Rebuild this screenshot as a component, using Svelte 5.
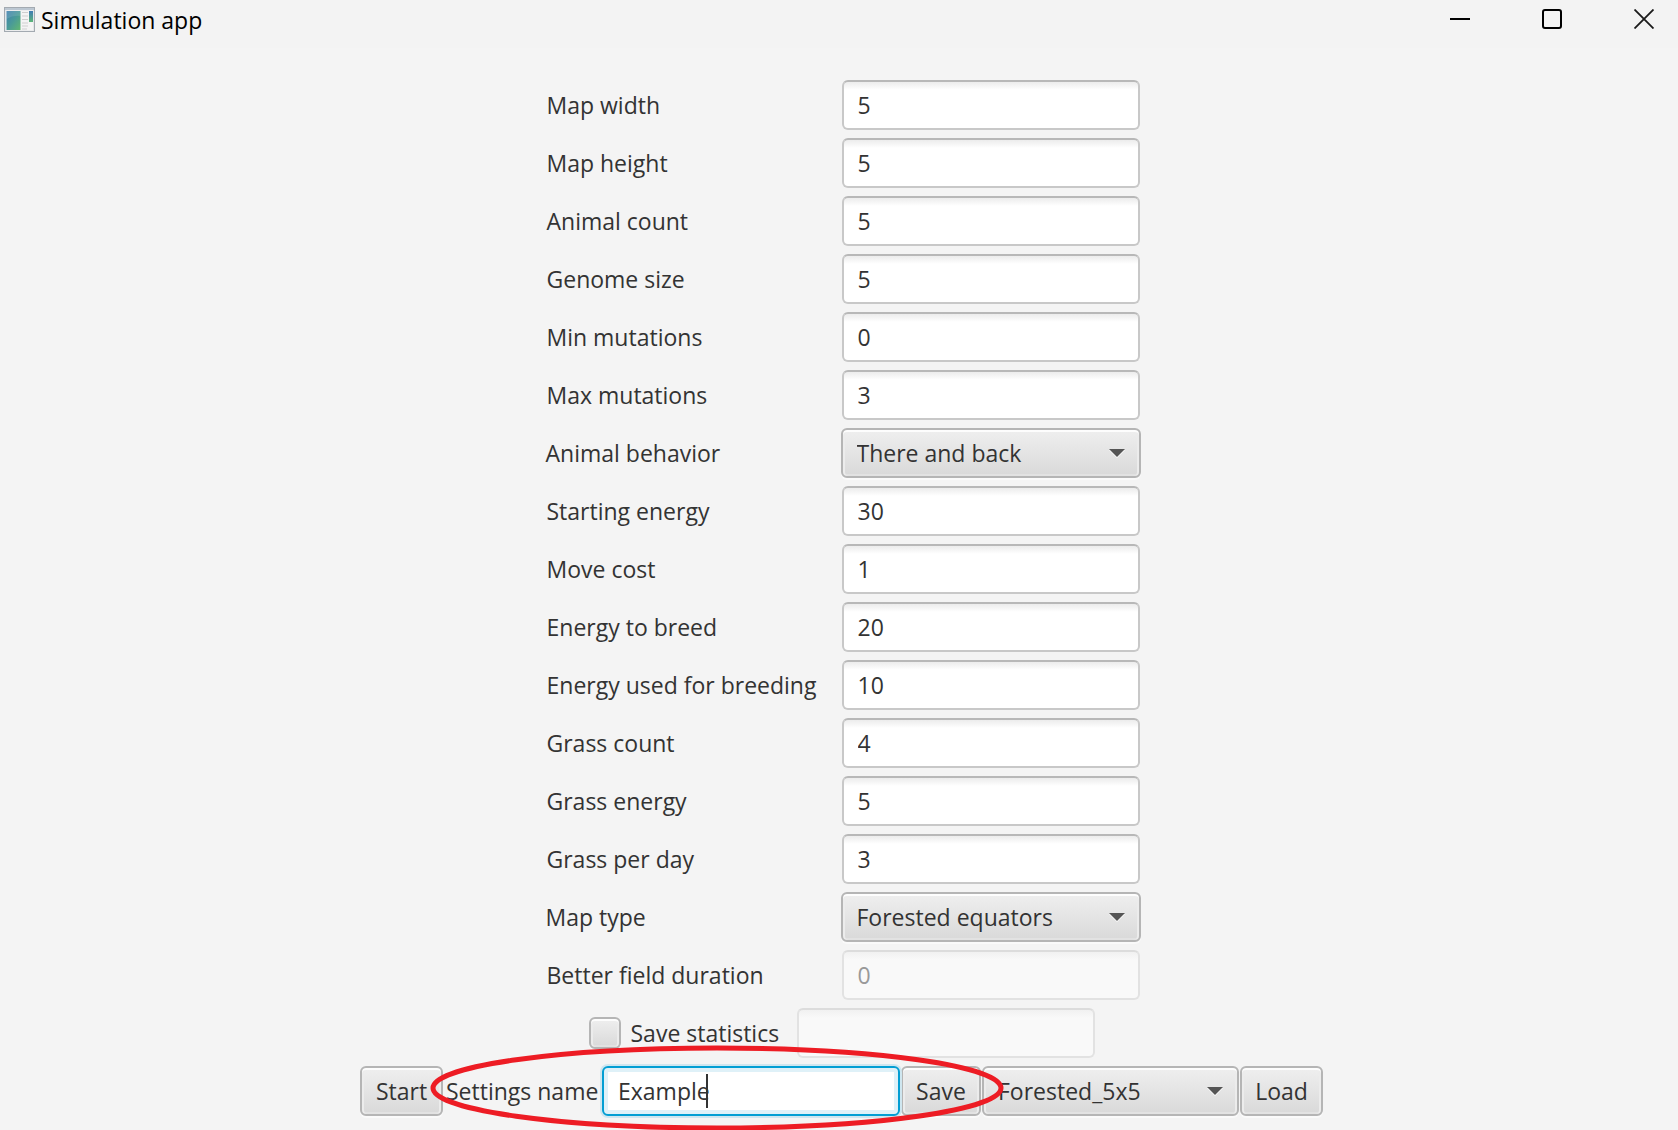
<script>
  const fields = [
    { id: 'map-width', label: 'Map width', value: '5' },
    { id: 'map-height', label: 'Map height', value: '5' },
    { id: 'animal-count', label: 'Animal count', value: '5' },
    { id: 'genome-size', label: 'Genome size', value: '5' },
    { id: 'min-mutations', label: 'Min mutations', value: '0' },
    { id: 'max-mutations', label: 'Max mutations', value: '3' },
    { id: 'behavior', label: 'Animal behavior', value: 'There and back', combo: true },
    { id: 'start-energy', label: 'Starting energy', value: '30' },
    { id: 'move-cost', label: 'Move cost', value: '1' },
    { id: 'breed-energy', label: 'Energy to breed', value: '20' },
    { id: 'breed-used', label: 'Energy used for breeding', value: '10' },
    { id: 'grass-count', label: 'Grass count', value: '4' },
    { id: 'grass-energy', label: 'Grass energy', value: '5' },
    { id: 'grass-day', label: 'Grass per day', value: '3' },
    { id: 'map-type', label: 'Map type', value: 'Forested equators', combo: true },
    { id: 'duration', label: 'Better field duration', value: '0', disabled: true }
  ];
</script>

<div class="window">
  <header class="titlebar">
    <svg class="appicon" width="32" height="26" viewBox="0 0 32 26" aria-hidden="true">
      <defs>
        <linearGradient id="pane" x1="0" y1="0" x2="1" y2="1">
          <stop offset="0" stop-color="#3f7fb0" />
          <stop offset="0.5" stop-color="#4a9a98" />
          <stop offset="1" stop-color="#62b870" />
        </linearGradient>
        <linearGradient id="bar" x1="0" y1="0" x2="0" y2="1">
          <stop offset="0" stop-color="#3f7bb4" />
          <stop offset="1" stop-color="#5cb578" />
        </linearGradient>
      </defs>
      <rect x="0.5" y="0.5" width="30" height="24" fill="#e4e6e8" stroke="#a3aab1" />
      <rect x="1" y="1" width="29" height="2" fill="#bcc7d2" />
      <rect x="2" y="3.5" width="27" height="20" fill="#f4f4f4" />
      <rect x="2.5" y="4" width="14" height="19" fill="url(#pane)" />
      <path d="M2.5 12Q9 8 16.5 9V4H2.5Z" fill="#fff" opacity="0.12" />
      <path d="M18 5.500h6M18 9h6M18 12.500h6M18 16h6M18 19h6M18 22h5" stroke="#cfcfcf" stroke-width="1.200" />
      <rect x="25" y="4" width="4" height="11" fill="url(#bar)" />
    </svg>
    <h1>Simulation app</h1>
    <div class="controls">
      <button type="button" aria-label="Minimize">
        <svg width="20" height="20" viewBox="0 0 20 20"><path d="M0 10h20" stroke="#000" stroke-width="2" /></svg>
      </button>
      <button type="button" aria-label="Maximize">
        <svg width="20" height="20" viewBox="0 0 20 20"><rect x="1" y="1" width="18" height="18" rx="2" fill="none" stroke="#000" stroke-width="2" /></svg>
      </button>
      <button type="button" aria-label="Close">
        <svg width="20" height="20" viewBox="0 0 20 20"><path d="M0.500 0.500l19 19M19.500 0.500l-19 19" stroke="#1a1a1a" stroke-width="1.800" /></svg>
      </button>
    </div>
  </header>

  <main>
    {#each fields as f (f.id)}
      <div class="row">
        <label class="name" for={f.id}>{f.label}</label>
        {#if f.combo}
          <div class="combo">
            <select id={f.id}><option>{f.value}</option></select>
          </div>
        {:else}
          <input class="text" type="text" id={f.id} value={f.value} disabled={f.disabled} />
        {/if}
      </div>
    {/each}

    <div class="row">
      <label class="check"><input type="checkbox" />Save statistics</label>
      <input class="text" type="text" aria-label="Statistics file" disabled />
    </div>

    <div class="row actions">
      <button class="btn" type="button">Start</button>
      <label class="settings" for="settings-name">Settings name</label>
      <div class="focused">
        <input class="text" type="text" id="settings-name" value="Example" />
        <span class="caret"></span>
      </div>
      <button class="btn save" type="button">Save</button>
      <div class="combo saved">
        <select aria-label="Saved settings"><option>Forested_5x5</option></select>
      </div>
      <button class="btn" type="button">Load</button>
      <svg class="ring" width="574" height="88" viewBox="0 0 574 88" aria-hidden="true">
        <ellipse cx="287" cy="44" rx="284" ry="40" fill="none" stroke="#ed1c24" stroke-width="5" />
      </svg>
    </div>
  </main>
</div>

<style>
  :global(body) {
    margin: 0;
    background: #f4f4f4;
    overflow: hidden;
  }
  .window {
    min-height: 100vh;
    box-sizing: border-box;
    color: #333;
    font-family: 'Open Sans', 'Noto Sans', sans-serif;
    font-size: 23px;
    line-height: 32px;
  }
  .titlebar {
    display: flex;
    align-items: center;
    height: 48px;
    padding: 0 0 8px 4px;
    box-sizing: border-box;
    background: #f3f3f3;
  }
  h1 {
    flex: 1;
    margin: 0 0 0 5px;
    color: #000;
    font-size: 23px;
    font-weight: 400;
  }
  .controls {
    display: flex;
    align-self: flex-start;
  }
  .controls button {
    display: grid;
    place-items: center;
    box-sizing: border-box;
    width: 92px;
    height: 38px;
    padding: 0;
    border: 0;
    background: none;
  }
  .controls button:last-child {
    width: 80px;
    padding-left: 12px;
  }
  .controls svg {
    display: block;
  }
  main {
    display: flex;
    flex-direction: column;
    gap: 8px;
    padding: 32px 0 14px 5px;
  }
  .row {
    display: flex;
    justify-content: center;
    align-items: center;
    height: 50px;
  }
  .name {
    width: 295px;
    padding-left: 3px;
    white-space: nowrap;
  }
  input,
  select,
  .btn {
    box-sizing: border-box;
    color: #333;
    font: inherit;
  }
  .text {
    width: 298px;
    height: 50px;
    padding: 0 14px;
    border: 2px solid #c8c8c8;
    border-top-color: #b8b8b8;
    border-radius: 6px;
    outline: none;
    background: linear-gradient(#ececec, #fff 8px);
  }
  .text:disabled {
    border-color: #e2e2e2;
    border-top-color: #dcdcdc;
    background: linear-gradient(#f1f1f1, #f9f9f9 8px);
    color: #999;
  }
  .combo {
    position: relative;
    width: 300px;
  }
  select,
  .btn,
  .check input {
    appearance: none;
    display: block;
    margin: 0;
    border: 2px solid #b5b5b5;
    border-radius: 6px;
    background: linear-gradient(#efefef, #d9d9d9);
    box-shadow:
      inset 0 2px 0 #fdfdfd,
      inset 2px 0 0 #ececec,
      inset -2px 0 0 #ececec,
      inset 0 -2px 0 #e2e2e2,
      0 2px 0 #fafafa;
  }
  select {
    width: 100%;
    height: 50px;
    padding: 0 14px;
  }
  .combo::after {
    content: '';
    position: absolute;
    top: 21px;
    right: 16px;
    border: 8px solid transparent;
    border-top-color: #555;
    border-bottom: 0;
    filter: drop-shadow(0 1px 0 #fff);
    pointer-events: none;
  }
  .check {
    display: flex;
    align-items: center;
    gap: 10px;
    width: 208px;
    white-space: nowrap;
  }
  .check input {
    width: 32px;
    height: 32px;
  }
  .actions {
    position: relative;
    width: 963px;
    margin: 0 auto;
    gap: 1px;
  }
  .btn {
    width: 83px;
    height: 50px;
    padding: 0;
  }
  .save {
    width: 80px;
  }
  .settings {
    width: 155px;
    padding-left: 2px;
    white-space: nowrap;
  }
  .focused {
    position: relative;
  }
  .focused .text {
    display: block;
    border-color: #039ed3;
    background: #fff;
    box-shadow:
      inset 0 0 0 4px #dff1f8,
      0 0 0 2px #cfe6ef;
  }
  .caret {
    position: absolute;
    top: 8px;
    left: 104px;
    width: 2px;
    height: 34px;
    background: #333;
  }
  .saved {
    width: 257px;
  }
  .ring {
    position: absolute;
    top: -22px;
    left: 70px;
    pointer-events: none;
  }
</style>
